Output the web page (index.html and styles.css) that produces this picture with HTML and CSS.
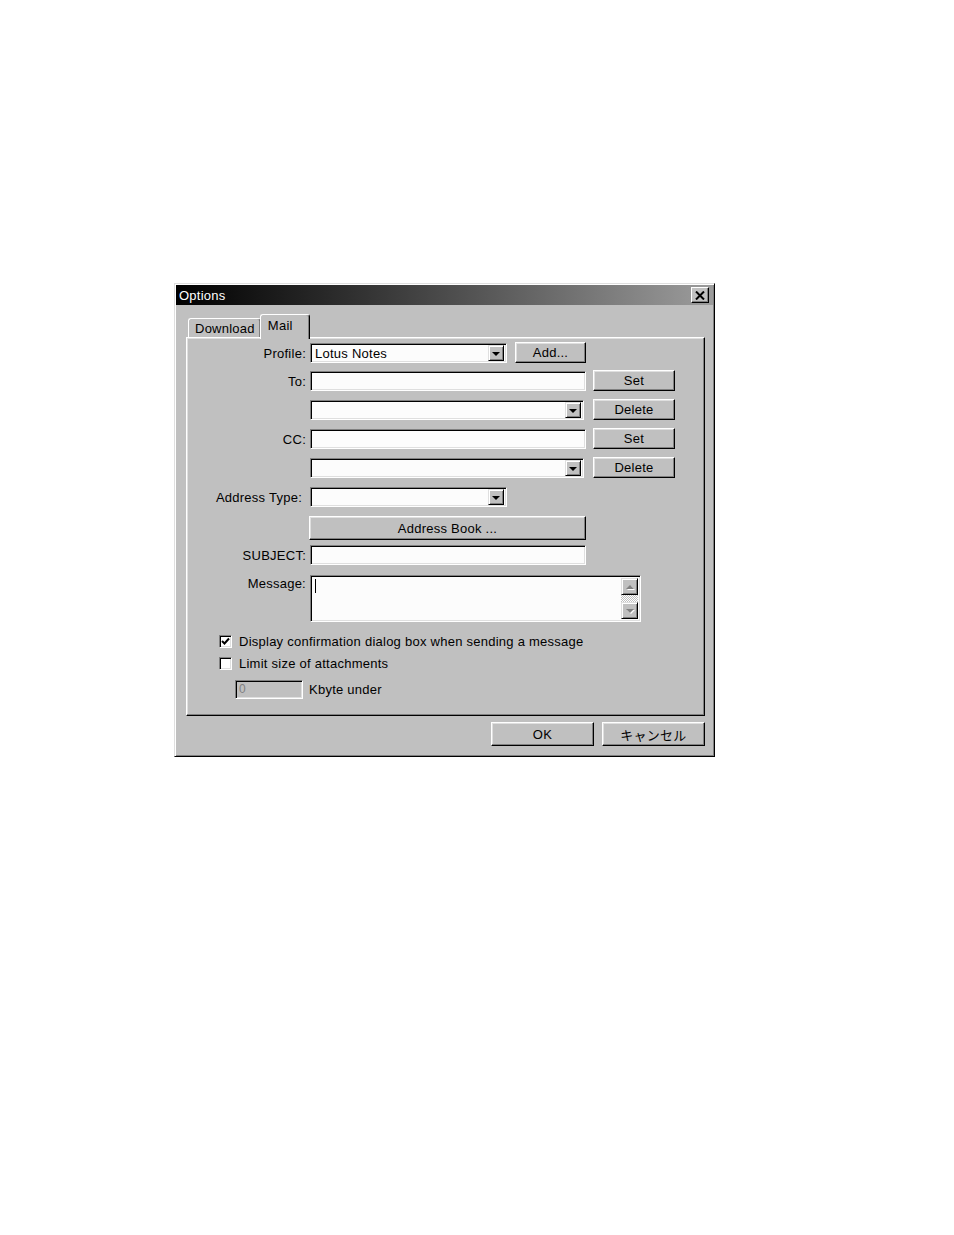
FILE: index.html
```html
<!DOCTYPE html>
<html>
<head>
<meta charset="utf-8">
<title>Options</title>
<link rel="stylesheet" href="styles.css">
</head>
<body>

<div class="page">
  <div class="dialog">
    <div class="titlebar">
      <span class="titlebar__text">Options</span>
      <span class="titlebar__close">
        <svg width="10" height="9" viewBox="0 0 10 9"><path d="M1 0.5 L9 8.5 M9 0.5 L1 8.5" stroke="#000" stroke-width="2"/></svg>
      </span>
    </div>
    <div class="dialog__body">
      <div class="tabs">
        <div class="tab">Download</div>
        <div class="tab tab--active">Mail</div>
      </div>
      <div class="panel">

        <div class="row">
          <span class="label">Profile:</span>
          <div class="combo combo--short"><span class="combo__text">Lotus Notes</span><span class="combo__arrow"></span></div>
          <button class="btn btn--add">Add...</button>
        </div>

        <div class="row row--to">
          <span class="label">To:</span>
          <div class="field field--wide"></div>
          <button class="btn btn--side">Set</button>
        </div>

        <div class="row row--next">
          <span class="label"></span>
          <div class="combo combo--long"><span class="combo__text"></span><span class="combo__arrow"></span></div>
          <button class="btn btn--side btn--after-combo">Delete</button>
        </div>

        <div class="row row--cc">
          <span class="label">CC:</span>
          <div class="field field--wide"></div>
          <button class="btn btn--side">Set</button>
        </div>

        <div class="row row--next">
          <span class="label"></span>
          <div class="combo combo--long"><span class="combo__text"></span><span class="combo__arrow"></span></div>
          <button class="btn btn--side btn--after-combo">Delete</button>
        </div>

        <div class="row row--next">
          <span class="label label--type">Address Type:</span>
          <div class="combo combo--short"><span class="combo__text"></span><span class="combo__arrow"></span></div>
        </div>

        <div class="row row--book">
          <span class="label"></span>
          <button class="btn btn--book">Address Book ...</button>
        </div>

        <div class="row row--subject">
          <span class="label">SUBJECT:</span>
          <div class="field field--wide"></div>
        </div>

        <div class="row row--message">
          <span class="label label--top">Message:</span>
          <div class="memo">
            <div class="memo__text"><span class="caret"></span></div>
            <div class="scroll">
              <span class="scroll__btn scroll__btn--up"></span>
              <span class="scroll__track"></span>
              <span class="scroll__btn scroll__btn--down"></span>
            </div>
          </div>
        </div>

        <div class="check check--first">
          <span class="check__box">
            <svg width="9" height="9" viewBox="0 0 9 9"><path d="M1 4 L3.5 6.5 L8 1.5" fill="none" stroke="#000" stroke-width="2"/></svg>
          </span>
          <span class="check__label">Display confirmation dialog box when sending a message</span>
        </div>

        <div class="check">
          <span class="check__box"></span>
          <span class="check__label">Limit size of attachments</span>
        </div>

        <div class="kbyte">
          <div class="field field--disabled">0</div>
          <span class="kbyte__label">Kbyte under</span>
        </div>

      </div>
      <div class="footer">
        <button class="btn btn--dlg">OK</button>
        <button class="btn btn--dlg">キャンセル</button>
      </div>
    </div>
  </div>
</div>

</body>
</html>
```

FILE: styles.css
```css
html {
  font-family: "Liberation Sans", "Noto Sans CJK JP", sans-serif;
  font-size: 13px;
  letter-spacing: 0.25px;
}

body {
  margin: 0;
  background: #fff;
  color: #000;
}

.page {
  padding: 283px 0 0 174px;
}

/* window */

.dialog {
  box-sizing: border-box;
  width: 541px;
  height: 474px;
  background: #c0c0c0;
  border: 1px solid;
  border-color: #dfdfdf #000 #000 #dfdfdf;
  box-shadow: inset 1px 1px #fff, inset -1px -1px #808080;
}

.titlebar {
  margin: 1px 1px 0 1px;
  height: 20px;
  background-image: linear-gradient(90deg, #000 0%, #333 35%, #9c9c9c 100%);
  display: flex;
  align-items: center;
  justify-content: space-between;
  padding: 0 4px 0 3px;
}

.titlebar__text {
  color: #fff;
  font-size: 13px;
}

.titlebar__close {
  box-sizing: border-box;
  width: 18px;
  height: 16px;
  background: #c0c0c0;
  border: 1px solid;
  border-color: #fff #000 #000 #fff;
  box-shadow: inset -1px -1px #808080;
  display: flex;
  align-items: center;
  justify-content: center;
}

.dialog__body {
  padding: 9px 9px 0 11px;
}

/* tabs */

.tabs {
  display: flex;
  align-items: flex-end;
  height: 23px;
  padding-left: 2px;
}

.tab {
  box-sizing: border-box;
  height: 19px;
  padding: 2px 5px 0 6px;
  border: 1px solid;
  border-bottom: none;
  border-color: #fff #000 #000 #fff;
  border-radius: 3px 3px 0 0;
  box-shadow: inset -1px 0 #808080;
}

.tab--active {
  position: relative;
  z-index: 1;
  height: 25px;
  margin-bottom: -2px;
  margin-left: -1px;
  padding: 3px 16px 0 7px;
  background: #c0c0c0;
}

.panel {
  box-sizing: border-box;
  height: 379px;
  border: 1px solid;
  border-color: #fff #000 #000 #fff;
  box-shadow: inset -1px -1px #808080, inset 1px 1px #dfdfdf;
  padding-top: 5px;
}

/* form rows */

.row {
  display: flex;
  align-items: center;
  height: 20px;
}

.row--to { margin-top: 8px; }
.row--next { margin-top: 9px; }
.row--cc { margin-top: 9px; }
.row--book { margin-top: 9px; height: 24px; }
.row--subject { margin-top: 5px; }
.row--message { margin-top: 10px; height: 47px; align-items: flex-start; }

.label {
  width: 119px;
  margin-right: 4px;
  text-align: right;
  white-space: nowrap;
}

.label--type {
  padding-right: 4px;
  box-sizing: border-box;
}

.label--top {
  padding-top: 1px;
}

.field,
.combo,
.memo {
  box-sizing: border-box;
  height: 20px;
  background: #fcfcfc;
  border: 1px solid;
  border-color: #808080 #fff #fff #808080;
  box-shadow: inset 1px 1px #000, inset -1px -1px #dfdfdf;
}

.field--wide {
  width: 276px;
}

.combo {
  display: flex;
  align-items: center;
  padding: 2px;
}

.combo--short { width: 197px; }
.combo--long { width: 274px; }

.combo__text {
  flex: 1;
  padding-left: 2px;
  white-space: nowrap;
}

.combo__arrow {
  box-sizing: border-box;
  width: 16px;
  height: 16px;
  background: #c0c0c0;
  border: 1px solid;
  border-color: #dfdfdf #000 #000 #dfdfdf;
  box-shadow: inset 1px 1px #fff, inset -1px -1px #808080;
  display: flex;
  align-items: center;
  justify-content: center;
}

.combo__arrow::after {
  content: "";
  border-left: 4px solid transparent;
  border-right: 4px solid transparent;
  border-top: 4px solid #000;
  margin-top: 1px;
}

/* buttons */

.btn {
  box-sizing: border-box;
  font-family: inherit;
  font-size: inherit;
  letter-spacing: inherit;
  color: #000;
  background: #c0c0c0;
  border: 1px solid;
  border-color: #fff #000 #000 #fff;
  box-shadow: inset -1px -1px #808080, inset 1px 1px #dfdfdf;
  padding: 0;
  height: 21px;
}

.btn--add {
  width: 71px;
  margin-left: 8px;
  margin-top: -2px;
}

.btn--side {
  width: 82px;
  margin-left: 7px;
  margin-top: -1px;
}

.btn--after-combo {
  margin-left: 9px;
}

.btn--book {
  width: 277px;
  height: 24px;
  margin-left: -1px;
}

.btn--dlg {
  width: 103px;
  height: 24px;
}

/* message box */

.memo {
  width: 331px;
  height: 47px;
  display: flex;
  padding: 2px;
}

.memo__text {
  flex: 1;
  padding: 1px 0 0 2px;
}

.caret {
  display: block;
  width: 1px;
  height: 14px;
  background: #000;
}

.scroll {
  width: 17px;
  display: flex;
  flex-direction: column;
}

.scroll__btn {
  box-sizing: border-box;
  height: 17px;
  background: #c0c0c0;
  border: 1px solid;
  border-color: #dfdfdf #000 #000 #dfdfdf;
  box-shadow: inset 1px 1px #fff, inset -1px -1px #808080;
  display: flex;
  align-items: center;
  justify-content: center;
}

.scroll__btn--up::after {
  content: "";
  border-left: 4px solid transparent;
  border-right: 4px solid transparent;
  border-bottom: 4px solid #808080;
  filter: drop-shadow(1px 1px 0 #fff);
}

.scroll__btn--down::after {
  content: "";
  border-left: 4px solid transparent;
  border-right: 4px solid transparent;
  border-top: 4px solid #808080;
  filter: drop-shadow(1px 1px 0 #fff);
}

.scroll__track {
  flex: 1;
  background-color: #c0c0c0;
  background-image: repeating-conic-gradient(#fff 0 25%, #c0c0c0 0 50%);
  background-size: 2px 2px;
}

/* check boxes */

.check {
  display: flex;
  align-items: center;
  height: 14px;
  margin-top: 8px;
  padding-left: 32px;
}

.check--first {
  margin-top: 12px;
}

.check__box {
  box-sizing: border-box;
  width: 13px;
  height: 13px;
  background: #fff;
  border: 1px solid;
  border-color: #808080 #fff #fff #808080;
  box-shadow: inset 1px 1px #000, inset -1px -1px #dfdfdf;
  display: flex;
  align-items: center;
  justify-content: center;
  margin-right: 7px;
}

.kbyte {
  display: flex;
  align-items: center;
  margin-top: 10px;
  padding-left: 48px;
  height: 19px;
}

.field--disabled {
  width: 68px;
  height: 19px;
  background: #c0c0c0;
  color: #808080;
  padding: 1px 0 0 3px;
  font-size: 12px;
}

.kbyte__label {
  margin-left: 6px;
}

.footer {
  display: flex;
  justify-content: flex-end;
  gap: 8px;
  margin-top: 6px;
}
```
